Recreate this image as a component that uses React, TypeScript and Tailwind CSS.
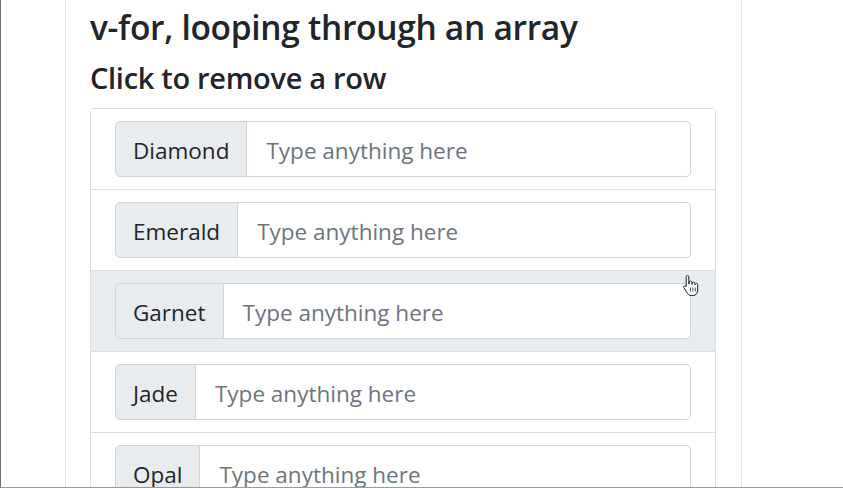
import React from "react";

const gems = ["Diamond", "Emerald", "Garnet", "Jade", "Opal"];

function Hand() {
  return (
    <svg width="18" height="24" viewBox="0 0 18 24" className="absolute left-[681px] top-[274px]">
      <path
        d="M5.5 1.5c.8 0 1.3.6 1.3 1.4v7.2h.4V8.3c0-.8.6-1.3 1.3-1.3s1.3.5 1.3 1.3v2h.4V9.4c0-.8.6-1.3 1.3-1.3s1.3.5 1.3 1.3v1.2h.4c0-.8.5-1.3 1.2-1.3.8 0 1.3.5 1.3 1.3v5.4c0 3-1.8 5.5-4.6 5.5H9.2c-1.8 0-2.8-.9-3.8-2.2L2 13.9c-.5-.6-.4-1.4.2-1.8.6-.4 1.3-.3 1.8.2l.2.3V2.9c0-.8.5-1.4 1.3-1.4z"
        fill="#fff"
        stroke="#222"
        strokeWidth="1"
        strokeLinejoin="round"
      />
      <path d="M8.5 13.5v4M10.9 13.5v4M13.3 13.5v4" stroke="#222" strokeWidth="0.8" />
    </svg>
  );
}

export default function App() {
  return (
    <div
      className="relative w-[843px] h-[488px] overflow-hidden bg-white border-l border-b border-l-[#6e7178] border-b-[#9a9a9a]"
      style={{ fontFamily: '"Open Sans", "Noto Sans", sans-serif' }}
    >
      <div className="ml-[64px] w-[677px] h-full border-x border-[#e3e5e8] px-[24px] pt-[6px]">
        <h2 className="text-[33.5px] leading-[42px] font-semibold text-[#212529] tracking-[-0.3px] whitespace-nowrap">
          v-for, looping through an array
        </h2>
        <h3 className="mt-[11px] text-[29px] leading-[38px] font-semibold text-[#212529] tracking-[-0.3px] whitespace-nowrap">
          Click to remove a row
        </h3>
        <ul className="mt-[11px] w-[626px] border border-[#dcdfe2] rounded-[4px]">
          {gems.map((g, i) => (
            <li
              key={g}
              className={`px-[24px] py-[12px] ${i > 0 ? "border-t border-[#dcdfe2]" : ""} ${
                g === "Garnet" ? "bg-[#e9ecef]" : "bg-white"
              }`}
            >
              <div className="flex h-[56px] text-[22.5px]">
                <span className="flex items-center pt-[3px] px-[17px] bg-[#e9ecef] border border-[#ced4da] rounded-l-[5px] text-[#212529]">
                  {g}
                </span>
                <input
                  className="flex-1 min-w-0 pt-[3px] px-[19px] bg-white border border-l-0 border-[#ced4da] rounded-r-[5px] text-[#495057] placeholder:text-[#6c757d] outline-none"
                  placeholder="Type anything here"
                />
              </div>
            </li>
          ))}
        </ul>
      </div>
      <Hand />
    </div>
  );
}
